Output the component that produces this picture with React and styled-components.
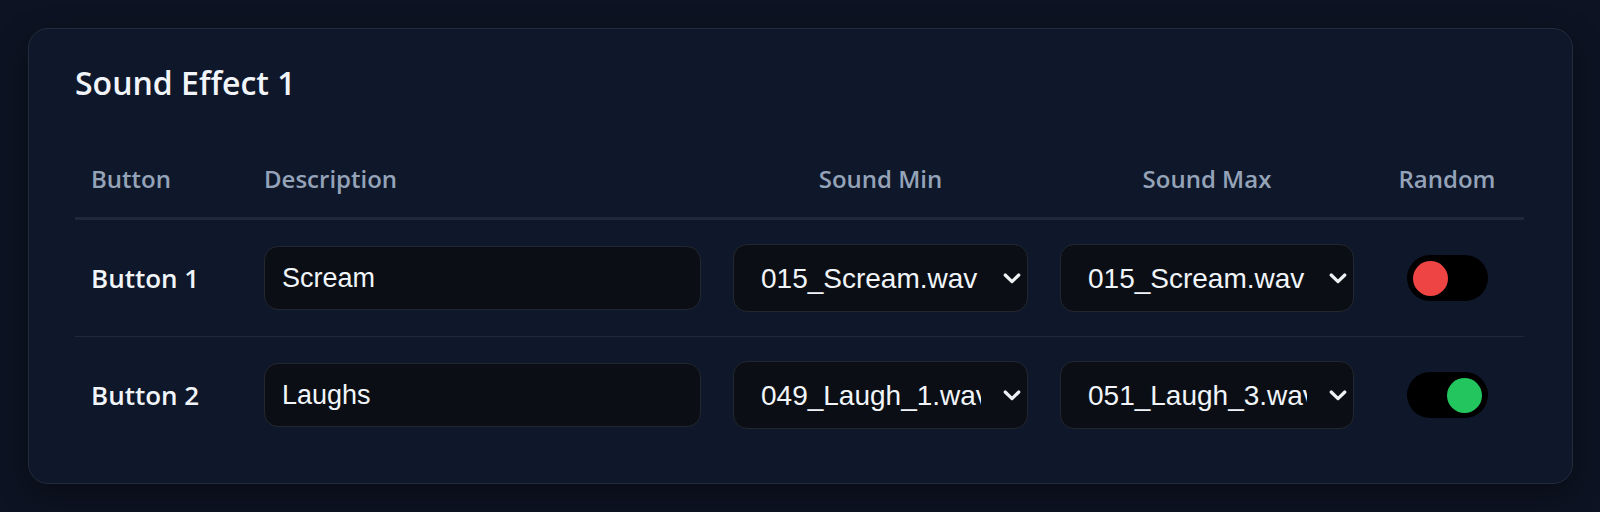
import React, { useState } from "react"
import styled, { createGlobalStyle } from "styled-components"

const GlobalStyle = createGlobalStyle`
  html, body {
    margin: 0;
    background: #0d1322;
    font-family: "Open Sans", "Noto Sans", sans-serif;
    color-scheme: dark;
  }
`;

const sounds = [
  "015_Scream.wav",
  "049_Laugh_1.wav",
  "050_Laugh_2.wav",
  "051_Laugh_3.wav",
];

const initialRows = [
  { id: 1, label: "Button 1", desc: "Scream", min: "015_Scream.wav", max: "015_Scream.wav", random: false },
  { id: 2, label: "Button 2", desc: "Laughs", min: "049_Laugh_1.wav", max: "051_Laugh_3.wav", random: true },
];

const Chevron = () => (
  <ChevronIcon viewBox="0 0 18 11" aria-hidden="true">
    <polyline points="2.2,2 9,8.6 15.8,2" />
  </ChevronIcon>
);

const SoundSelect = ({ value, onChange }) => (
  <SelectWrap>
    <Select value={value} onChange={e => onChange(e.target.value)}>
      {sounds.map(s => <option key={s} value={s}>{s}</option>)}
    </Select>
    <Chevron />
  </SelectWrap>
);

export default function App() {
  const [rows, setRows] = useState(initialRows)

  const update = (id, key, value) =>
    setRows(rows.map(r => (r.id === id ? { ...r, [key]: value } : r)))

  return (
    <Page>
      <GlobalStyle />
      <Card>
        <Title>Sound Effect 1</Title>
        <Table>
          <colgroup>
            <col style={{ width: 173 }} />
            <col style={{ width: 469 }} />
            <col style={{ width: 327 }} />
            <col style={{ width: 326 }} />
            <col style={{ width: 154 }} />
          </colgroup>
          <thead>
            <tr>
              <HeadCell>Button</HeadCell>
              <HeadCell>Description</HeadCell>
              <HeadCell $center>Sound Min</HeadCell>
              <HeadCell $center>Sound Max</HeadCell>
              <HeadCell $center>Random</HeadCell>
            </tr>
          </thead>
          <tbody>
            {rows.map(row => (
              <Row key={row.id}>
                <LabelCell>{row.label}</LabelCell>
                <Cell>
                  <TextInput value={row.desc} onChange={e => update(row.id, "desc", e.target.value)} />
                </Cell>
                <Cell>
                  <SoundSelect value={row.min} onChange={v => update(row.id, "min", v)} />
                </Cell>
                <Cell>
                  <SoundSelect value={row.max} onChange={v => update(row.id, "max", v)} />
                </Cell>
                <Cell $center>
                  <Toggle $on={row.random} onClick={() => update(row.id, "random", !row.random)}>
                    <Knob $on={row.random} />
                  </Toggle>
                </Cell>
              </Row>
            ))}
          </tbody>
        </Table>
      </Card>
    </Page>
  );
}

const Page = styled.div`
  padding: 28px 27px 28px 28px;
`;

const Card = styled.div`
  background: #0f172a;
  border: 1px solid #222c3d;
  border-radius: 20px;
  padding: 34px 48px 30px 46px;
  box-shadow: 0 10px 30px rgba(0, 0, 0, 0.35);
`;

const Title = styled.h2`
  margin: 0 0 44px;
  font-size: 32px;
  line-height: 40px;
  font-weight: 600;
  color: #f1f5f9;
`;

const Table = styled.table`
  width: 100%;
  table-layout: fixed;
  border-collapse: collapse;
`;

const HeadCell = styled.th`
  padding: 16px 16px 22px;
  font-size: 24px;
  line-height: 32px;
  font-weight: 600;
  color: #94a3b8;
  text-align: ${p => (p.$center ? "center" : "left")};
  border-bottom: 3px solid #1e293b;
`;

const Row = styled.tr`
  & + & td {
    border-top: 1px solid #1e293b;
  }
`;

const Cell = styled.td`
  padding: 24px 16px;
  vertical-align: middle;
  text-align: ${p => (p.$center ? "center" : "left")};
`;

const LabelCell = styled(Cell)`
  font-size: 26px;
  font-weight: 600;
  color: #f1f5f9;
`;

const TextInput = styled.input`
  box-sizing: border-box;
  width: 100%;
  height: 64px;
  padding: 0 17px;
  background: #0b0f15;
  border: 1px solid #23272f;
  border-radius: 14px;
  color: #f1f5f9;
  font-family: "Liberation Sans", Arial, sans-serif;
  font-size: 27px;
  outline: none;
`;

const SelectWrap = styled.div`
  position: relative;
`;

const Select = styled.select`
  box-sizing: border-box;
  width: 100%;
  height: 68px;
  padding: 0 46px 0 27px;
  appearance: none;
  background: #0b0f15;
  border: 1px solid #23272f;
  border-radius: 14px;
  color: #f1f5f9;
  font-family: "Liberation Sans", Arial, sans-serif;
  font-size: 28px;
  outline: none;
  cursor: pointer;
`;

const ChevronIcon = styled.svg`
  position: absolute;
  right: 7px;
  top: 50%;
  width: 18px;
  height: 11px;
  margin-top: -5px;
  pointer-events: none;
  fill: none;
  stroke: #eef0f3;
  stroke-width: 3.2;
  stroke-linecap: round;
  stroke-linejoin: round;
`;

const Toggle = styled.button`
  box-sizing: border-box;
  display: inline-flex;
  align-items: center;
  justify-content: ${p => (p.$on ? "flex-end" : "flex-start")};
  width: 81px;
  height: 46px;
  padding: 0 6px;
  border: none;
  border-radius: 23px;
  background: #000;
  cursor: pointer;
  vertical-align: middle;
`;

const Knob = styled.span`
  width: 35px;
  height: 35px;
  border-radius: 50%;
  background: ${p => (p.$on ? "#22c55e" : "#ef4444")};
`;
